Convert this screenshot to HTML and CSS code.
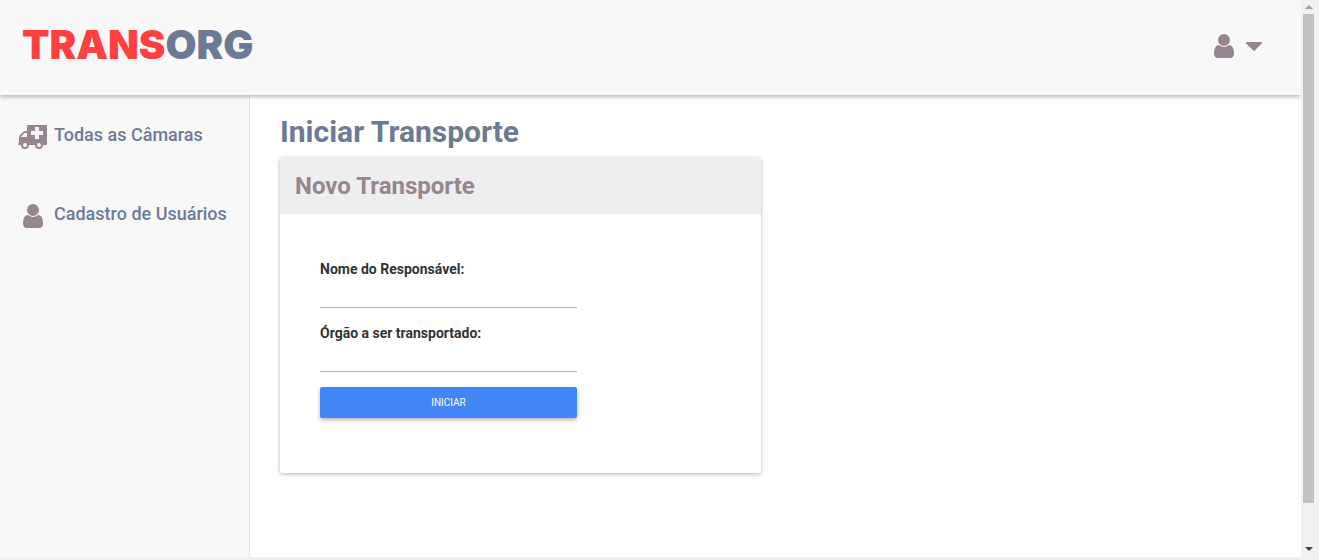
FILE: index.html
```html
<!DOCTYPE html>
<html lang="pt-BR">
<head>
<meta charset="utf-8">
<title>Transorg - Iniciar Transporte</title>
<link rel="stylesheet" href="styles.css">
</head>
<body>
<div class="viewport">
  <div class="app">
    <header class="topbar">
      <a class="logo" href="#"><span class="logo-accent">TRANS</span>ORG</a>
      <button class="user-menu" type="button" aria-label="Menu do usuário">
        <svg class="icon" viewBox="0 0 1792 1792" aria-hidden="true"><path d="M1536 1399q0 109-62.5 187t-150.5 78h-854q-88 0-150.5-78t-62.5-187q0-85 8.5-160.5t31.5-152 58.5-131 94-89 134.5-34.5q131 128 313 128t313-128q76 0 134.5 34.5t94 89 58.5 131 31.5 152 8.5 160.5zm-256-887q0 159-112.5 271.5t-271.5 112.5-271.5-112.5-112.5-271.5 112.5-271.5 271.5-112.5 271.5 112.5 112.5 271.5z"/></svg>
        <svg class="caret" viewBox="0 0 16 10" aria-hidden="true"><path d="M1 1h14q1 0 1 1 0 .4-.4.8l-6.900 6.800q-.7.600-1.400 0L.4 2.800Q0 2.400 0 2 0 1 1 1z"/></svg>
      </button>
    </header>
    <div class="columns">
      <nav class="sidebar">
        <a class="nav-link" href="#">
          <svg class="icon" viewBox="0 -1 30 28" aria-hidden="true"><path fill-rule="evenodd" d="M10 1h18q1 0 1 1v18q0 1-1.500 1H25a4 4 0 0 1-8 0h-6a4 4 0 0 1-8 0H1.500Q0 21 0 20q0-1 1-1v-5q0-2 1-3l3-3q1-1 2.500-1H9V2q0-1 1-1zM3 13h6V9H7q-.4 0-.7.300L3.300 12.300Q3 12.600 3 13zM17 3v4h-4v4h4v4h4v-4h4V7h-4V3zM7 19a2 2 0 1 0 0 4 2 2 0 0 0 0-4zM21 19a2 2 0 1 0 0 4 2 2 0 0 0 0-4z"/></svg>
          <span>Todas as Câmaras</span>
        </a>
        <a class="nav-link" href="#">
          <svg class="icon" viewBox="0 0 1792 1792" aria-hidden="true"><path d="M1536 1399q0 109-62.5 187t-150.5 78h-854q-88 0-150.5-78t-62.5-187q0-85 8.5-160.5t31.5-152 58.5-131 94-89 134.5-34.5q131 128 313 128t313-128q76 0 134.5 34.5t94 89 58.5 131 31.5 152 8.5 160.5zm-256-887q0 159-112.5 271.5t-271.5 112.5-271.5-112.5-112.5-271.5 112.5-271.5 271.5-112.5 271.5 112.5 112.5 271.5z"/></svg>
          <span>Cadastro de Usuários</span>
        </a>
      </nav>
      <main class="content">
        <h1 class="page-title">Iniciar Transporte</h1>
        <section class="card">
          <h2 class="card-title">Novo Transporte</h2>
          <form class="form">
            <label class="label" for="nome">Nome do Responsável:</label>
            <input class="field" id="nome" type="text">
            <label class="label" for="orgao">Órgão a ser transportado:</label>
            <input class="field" id="orgao" type="text">
            <button class="submit" type="button">INICIAR</button>
          </form>
        </section>
      </main>
    </div>
  </div>
  <div class="scrollbar" aria-hidden="true">
    <svg class="arrow arrow-up" viewBox="0 0 8 4"><path d="M0 4L4 0l4 4z"/></svg>
    <div class="track"><div class="thumb"></div></div>
    <svg class="arrow" viewBox="0 0 8 4"><path d="M0 0l4 4 4-4z"/></svg>
  </div>
</div>
</body>
</html>
```
FILE: styles.css
```css
* {
  box-sizing: border-box;
}

body {
  margin: 0;
  font-family: Roboto, "Liberation Sans", sans-serif;
  font-size: 14px;
  line-height: 20px;
  color: #333;
  background: #f0f0f0;
}

.viewport {
  display: flex;
  height: 100vh;
  padding-bottom: 3px;
}

.app {
  flex: 1;
  display: flex;
  flex-direction: column;
  overflow: hidden;
  background: #fff;
}

.topbar {
  display: flex;
  justify-content: space-between;
  align-items: center;
  height: 95px;
  padding: 0 38px 5px 22px;
  background: #f8f8f8;
  box-shadow: 0 2px 4px rgba(0, 0, 0, 0.26);
  z-index: 1;
}

.logo {
  font-family: Inter, "Open Sans", sans-serif;
  font-size: 40px;
  font-weight: 900;
  line-height: 48px;
  color: #6c7a96;
  text-decoration: none;
}

.logo-accent {
  color: #ff4040;
}

.user-menu {
  display: flex;
  align-items: center;
  gap: 6px;
  padding: 2px 0 0;
  border: 0;
  background: none;
}

.icon {
  flex: none;
  width: 30px;
  height: 28px;
  fill: #978590;
}

.caret {
  width: 18px;
  height: 10px;
  fill: #978590;
}

.columns {
  flex: 1;
  display: flex;
}

.sidebar {
  flex: none;
  display: flex;
  flex-direction: column;
  gap: 50px;
  width: 250px;
  padding: 27px 18px;
  background: #f8f8f8;
  border-right: 1px solid #e3e3e3;
}

.nav-link {
  display: flex;
  align-items: flex-end;
  gap: 6px;
  height: 29px;
  font-size: 18px;
  font-weight: 500;
  line-height: 26px;
  color: #6c7a96;
  text-decoration: none;
  white-space: nowrap;
}

.nav-link span {
  align-self: flex-start;
}

.content {
  flex: 1;
  padding: 20px 30px;
}

.page-title {
  margin: 0 0 10px;
  font-size: 30px;
  font-weight: 700;
  line-height: 33px;
  color: #6c7a96;
}

.card {
  max-width: 481px;
  border-radius: 2px;
  background: #fff;
  box-shadow: 0 1px 4px rgba(0, 0, 0, 0.3);
}

.card-title {
  margin: 0;
  padding: 15px;
  font-size: 24px;
  font-weight: 700;
  line-height: 26px;
  color: #978590;
  background: #eee;
  border-radius: 2px 2px 0 0;
}

.form {
  display: flex;
  flex-direction: column;
  width: 337px;
  max-width: 100%;
  padding: 45px 40px 55px;
}

.label {
  font-weight: 700;
}

.field {
  width: 100%;
  height: 29px;
  margin-bottom: 15px;
  padding: 0;
  border: 0;
  border-bottom: 1px solid #b3b3b3;
  background: none;
  font: inherit;
}

.submit {
  height: 31px;
  padding: 0;
  border: 0;
  border-radius: 2px;
  font-family: inherit;
  font-size: 10px;
  color: #fff;
  background: #4285f4;
  box-shadow: 0 2px 4px rgba(0, 0, 0, 0.3);
}

.scrollbar {
  display: flex;
  flex-direction: column;
  width: 18px;
  padding: 5px 5px 6px 2px;
  background: #f1f1f1;
}

.arrow {
  align-self: center;
  width: 8px;
  height: 4px;
  fill: #404040;
}

.arrow-up {
  fill: #a0a0a0;
}

.track {
  flex: 1;
  padding: 5px 0 7px;
}

.thumb {
  height: 93%;
  background: #c1c1c1;
}
```
